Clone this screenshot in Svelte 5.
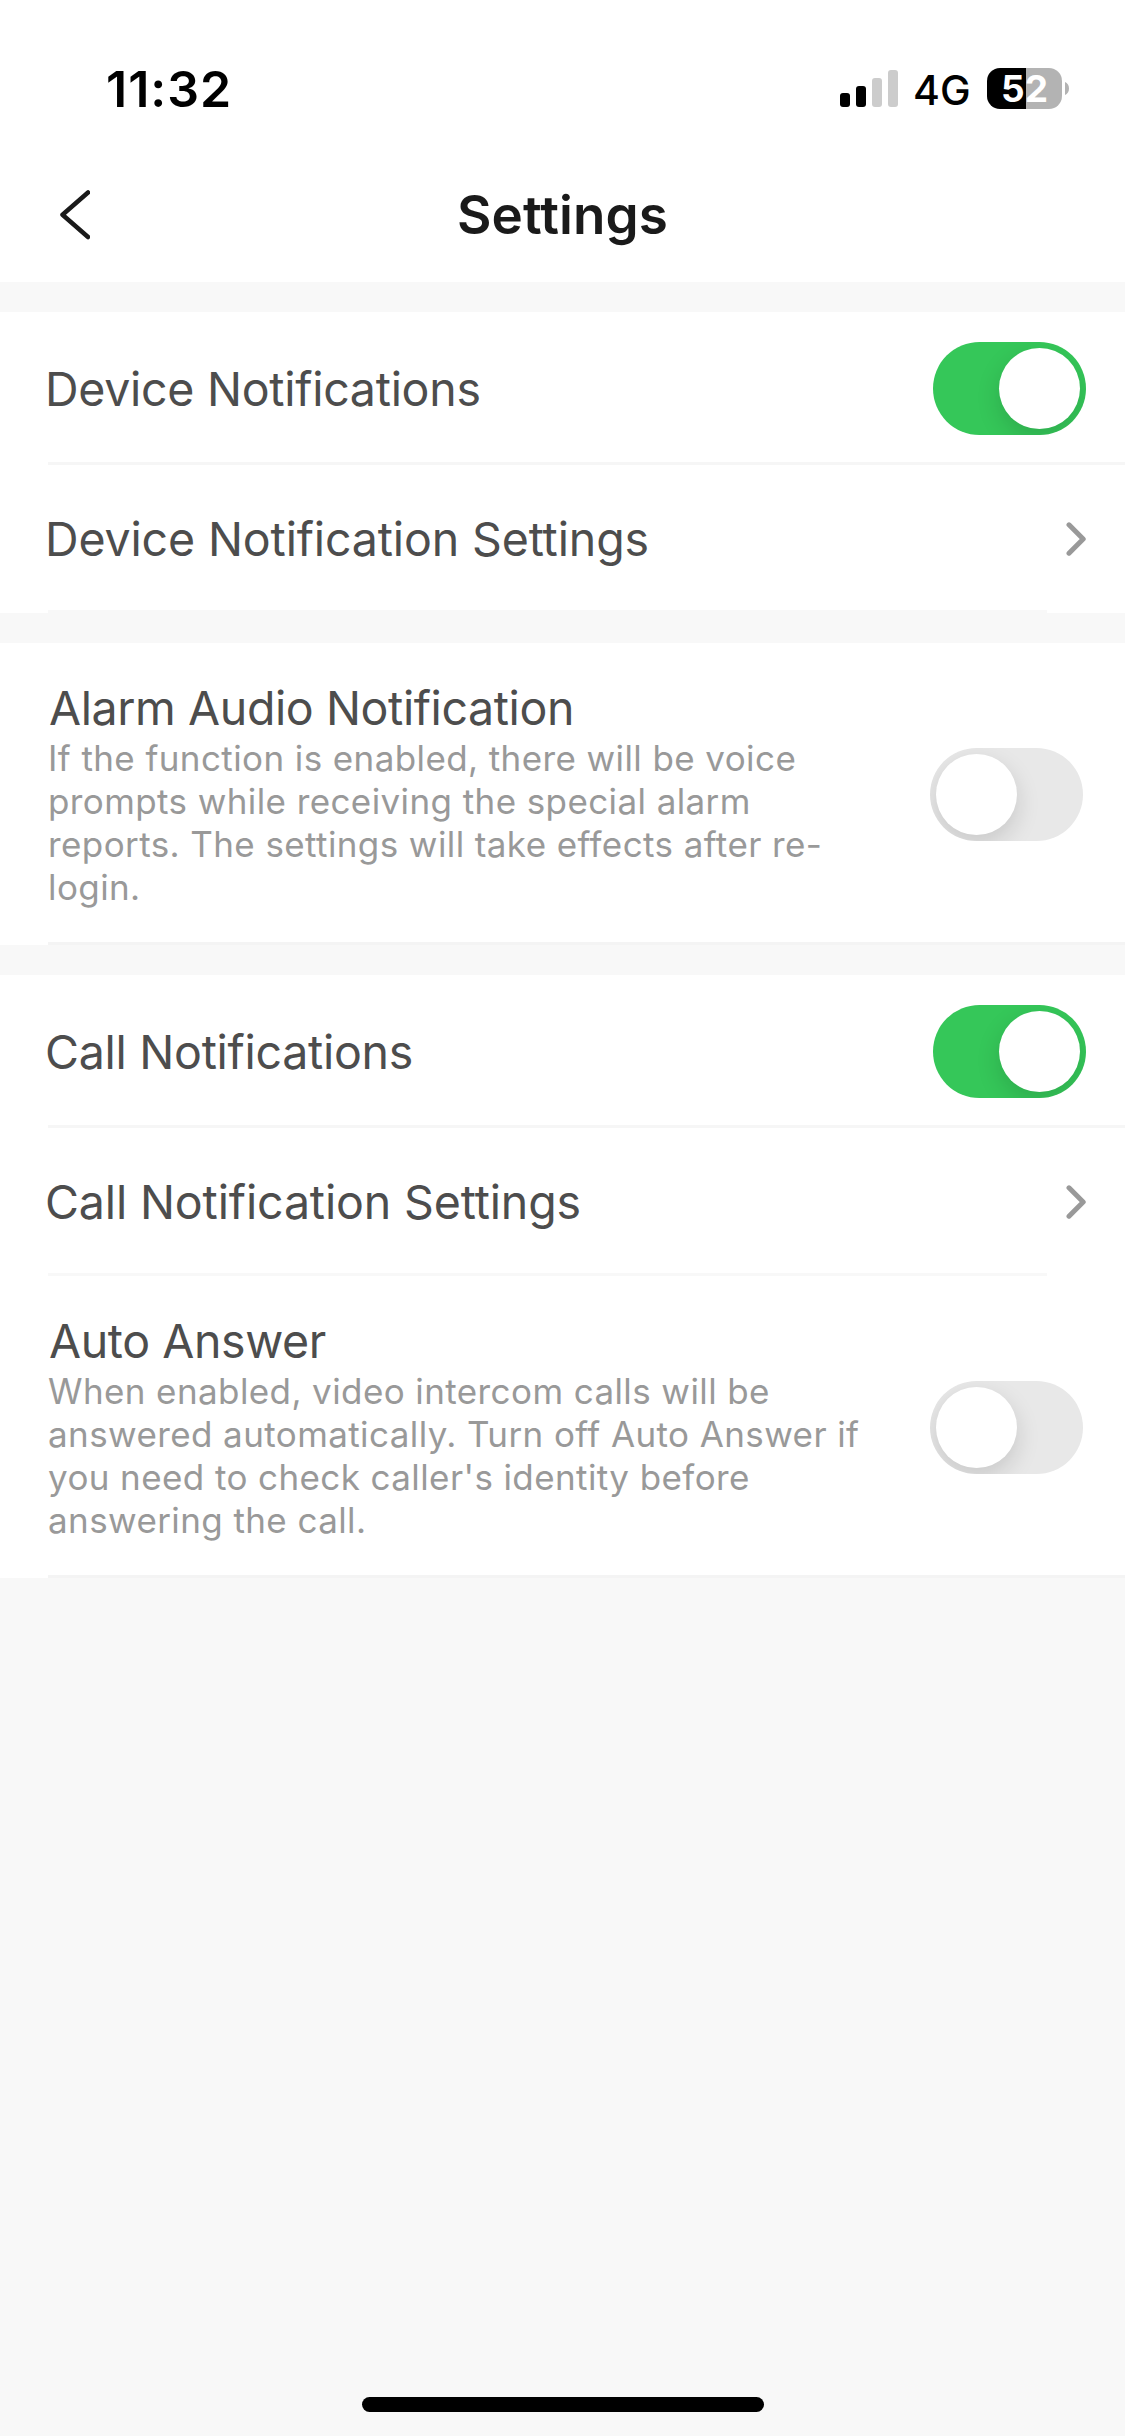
<script lang="ts">
	type Item = {
		title: string;
		lines?: string[];
		kind: 'switch' | 'link';
		on?: boolean;
	};

	let groups: Item[][] = $state([
		[
			{ title: 'Device Notifications', kind: 'switch', on: true },
			{ title: 'Device Notification Settings', kind: 'link' }
		],
		[
			{
				title: 'Alarm Audio Notification',
				lines: [
					'If the function is enabled, there will be voice',
					'prompts while receiving the special alarm',
					'reports. The settings will take effects after re-',
					'login.'
				],
				kind: 'switch',
				on: false
			}
		],
		[
			{ title: 'Call Notifications', kind: 'switch', on: true },
			{ title: 'Call Notification Settings', kind: 'link' },
			{
				title: 'Auto Answer',
				lines: [
					'When enabled, video intercom calls will be',
					'answered automatically. Turn off Auto Answer if',
					"you need to check caller's identity before",
					'answering the call.'
				],
				kind: 'switch',
				on: false
			}
		]
	]);
</script>

<div class="screen">
	<header>
		<div class="status">
			<span class="time">11:32</span>
			<div class="status-right">
				<svg class="signal" width="58" height="37" viewBox="0 0 58 37">
					<rect x="0" y="23" width="10" height="14" rx="3" />
					<rect x="16" y="16" width="10" height="21" rx="3" />
					<rect class="dim" x="32" y="8" width="10" height="29" rx="3" />
					<rect class="dim" x="48" y="0" width="10" height="37" rx="3" />
				</svg>
				<span class="network">4G</span>
				<div class="battery"><span>52</span></div>
				<svg class="nub" width="4" height="13" viewBox="0 0 4 13">
					<path d="M0 0C2.5 1 4 3.5 4 6.500S2.500 12 0 13Z" />
				</svg>
			</div>
		</div>
		<div class="navbar">
			<button class="back" aria-label="Back">
				<svg width="30" height="50" viewBox="0 0 30 50">
					<path d="M28 2.500L2.500 24.700L28 47" />
				</svg>
			</button>
			<h1>Settings</h1>
		</div>
	</header>

	<main>
		{#each groups as group}
			<section>
				{#each group as item}
					<div class="row {item.kind}" class:detailed={item.lines}>
						<div class="text">
							<div class="title">{item.title}</div>
							{#if item.lines}
								<p class="desc">
									{#each item.lines as line}
										<span>{line}</span>
									{/each}
								</p>
							{/if}
						</div>
						{#if item.kind === 'switch'}
							<button
								class="toggle"
								class:on={item.on}
								role="switch"
								aria-checked={item.on}
								aria-label={item.title}
								onclick={() => (item.on = !item.on)}
							>
								<span class="thumb"></span>
							</button>
						{:else}
							<svg class="chevron" width="20" height="34" viewBox="0 0 20 34">
								<path d="M3 2.800L17.200 17L3 31.200" />
							</svg>
						{/if}
					</div>
				{/each}
			</section>
		{/each}
	</main>

	<div class="home"></div>
</div>

<style>
	:global(body) {
		margin: 0;
		background: #f8f8f8;
	}

	.screen {
		display: flex;
		flex-direction: column;
		width: 1125px;
		height: 2436px;
		background: #f8f8f8;
		font-family: Inter, 'Liberation Sans', sans-serif;
		overflow: hidden;
	}

	header {
		height: 282px;
		background: #fff;
	}

	.status {
		display: flex;
		align-items: center;
		justify-content: space-between;
		box-sizing: border-box;
		height: 148px;
		padding: 29px 56px 0 106px;
		color: #000;
	}

	.time {
		font-size: 50px;
		font-weight: 600;
		line-height: 60px;
		letter-spacing: 1px;
	}

	.status-right {
		display: flex;
		align-items: center;
	}

	.signal .dim {
		fill: #ccc;
	}

	.network {
		margin: 2px 0 0 15px;
		width: 74px;
		font-size: 41px;
		font-weight: 500;
		line-height: 50px;
	}

	.battery {
		width: 75px;
		height: 41px;
		border-radius: 13px;
		background: linear-gradient(to right, #000 39px, #b3b3b3 39px);
		color: #fff;
		font-size: 37px;
		font-weight: 700;
		line-height: 41px;
		text-align: center;
	}

	.nub {
		margin-left: 3px;
		fill: #b3b3b3;
	}

	.navbar {
		position: relative;
		display: flex;
		align-items: center;
		justify-content: center;
		height: 134px;
	}

	.back {
		position: absolute;
		left: 60px;
		top: 42px;
		padding: 0;
		border: 0;
		background: none;
		line-height: 0;
	}

	.back path {
		fill: none;
		stroke: #1a1a1a;
		stroke-width: 4.5;
		stroke-linecap: round;
		stroke-linejoin: round;
	}

	h1 {
		margin: 0;
		color: #1a1a1a;
		font-size: 53px;
		font-weight: 600;
		line-height: 64px;
		letter-spacing: 0.1px;
	}

	section {
		margin-top: 30px;
		background: #fff;
	}

	.row {
		position: relative;
		display: flex;
		align-items: center;
		justify-content: space-between;
		box-sizing: border-box;
		height: 153px;
		padding: 0 39px 0 45px;
	}

	.row.link {
		height: 148px;
	}

	.row.detailed {
		height: 302px;
		padding: 0 42px 0 48px;
	}

	/* hairline under the row, starting at the text inset */
	.row::after {
		content: '';
		position: absolute;
		left: 48px;
		right: 0;
		bottom: 0;
		height: 3px;
		background: #f6f6f6;
	}

	.row.link::after {
		right: 78px;
		background: #f8f8f8;
	}

	.row.detailed::after {
		background: #f4f4f4;
	}

	.title {
		color: #4d4d4d;
		font-size: 46.5px;
		line-height: 56px;
		letter-spacing: -0.28px;
		white-space: nowrap;
	}

	.link .title {
		letter-spacing: -0.14px;
	}

	.detailed .title {
		letter-spacing: -0.4px;
		text-indent: 1px;
	}

	.desc {
		margin: 1px 0 -1px;
		color: #999;
		font-size: 35px;
		line-height: 42.8px;
		letter-spacing: 0.4px;
	}

	.desc span {
		display: block;
		white-space: nowrap;
	}

	.toggle {
		flex-shrink: 0;
		width: 153px;
		height: 93px;
		padding: 6px;
		border: 0;
		border-radius: 47px;
		background: #e8e8e8;
		overflow: hidden;
		cursor: pointer;
	}

	.thumb {
		display: block;
		width: 81px;
		height: 81px;
		border-radius: 50%;
		background: #fff;
		box-shadow: 0 9px 24px rgba(0, 0, 0, 0.14);
	}

	.toggle.on {
		background: #35c759;
	}

	.toggle.on .thumb {
		margin-left: 60px;
	}

	.chevron path {
		fill: none;
		stroke: #999;
		stroke-width: 5;
		stroke-linecap: round;
		stroke-linejoin: round;
	}

	.home {
		width: 402px;
		height: 15px;
		margin: auto auto 24px;
		border-radius: 8px;
		background: #000;
	}
</style>
